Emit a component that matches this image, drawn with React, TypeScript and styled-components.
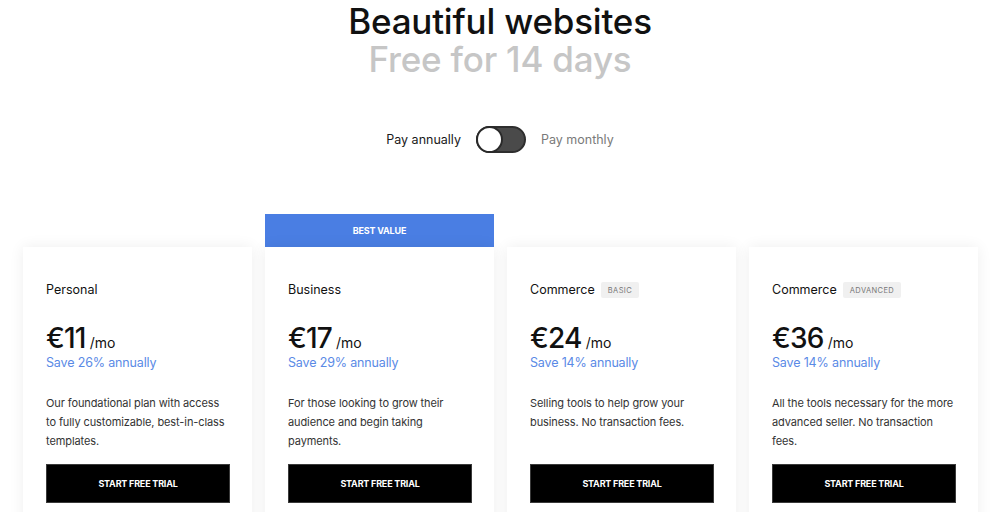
import React from "react";
import styled, { createGlobalStyle } from "styled-components";

const Global = createGlobalStyle`
  html, body { margin: 0; padding: 0; background: #fff; }
  body { font-family: Inter, "Liberation Sans", Arial, sans-serif; color: #111; overflow: hidden; }
  * { box-sizing: border-box; }
`;

const Page = styled.div`
  width: 1000px;
  height: 512px;
  overflow: hidden;
  display: flex;
  flex-direction: column;
  align-items: center;
`;

const Hero = styled.header`
  padding-top: 2px;
  text-align: center;
`;

const Title = styled.h1<{ $muted?: boolean }>`
  margin: 0;
  font-size: 35px;
  line-height: 38px;
  font-weight: 500;
  letter-spacing: -0.2px;
  color: ${(p) => (p.$muted ? "#c6c6c6" : "#111")};
`;

const ToggleRow = styled.div`
  margin-top: 48px;
  display: flex;
  align-items: center;
  gap: 15px;
`;

const ToggleLabel = styled.span<{ $active?: boolean }>`
  font-size: 12.5px;
  line-height: 16px;
  color: ${(p) => (p.$active ? "#1a1a1a" : "#7a7a7a")};
`;

const Track = styled.div`
  position: relative;
  width: 50px;
  height: 27px;
  border-radius: 14px;
  background: #4a4a4a;
  border: 2px solid #2e2e2e;
`;

const Knob = styled.div`
  position: absolute;
  left: -2px;
  top: -2px;
  width: 27px;
  height: 27px;
  border-radius: 50%;
  background: #fff;
  border: 2.5px solid #2a2a2a;
`;

const Plans = styled.div`
  margin-top: 61px;
  width: 100%;
  padding: 0 22px 0 23px;
  display: grid;
  grid-template-columns: repeat(4, 1fr);
  gap: 13px;
`;

const Column = styled.div<{ $featured?: boolean }>`
  display: flex;
  flex-direction: column;
  padding-top: ${(p) => (p.$featured ? "0" : "33px")};
`;

const Banner = styled.div`
  height: 33px;
  background: #4a7ee3;
  color: #fff;
  font-size: 9px;
  font-weight: 700;
  letter-spacing: -0.2px;
  display: flex;
  align-items: center;
  justify-content: center;
`;

const Card = styled.div`
  background: #fff;
  box-shadow: 0 0 14px rgba(0, 0, 0, 0.07);
  padding: 35px 22px 40px 23px;
  display: flex;
  flex-direction: column;
`;

const NameRow = styled.div`
  display: flex;
  align-items: center;
  gap: 6px;
  height: 16px;
`;

const PlanName = styled.span`
  font-size: 12.5px;
  line-height: 16px;
  color: #111;
`;

const Tag = styled.span`
  background: #f0f0f0;
  color: #777;
  font-size: 7.5px;
  letter-spacing: 0.4px;
  padding: 0 7px;
  height: 16px;
  display: inline-flex;
  align-items: center;
  border-radius: 2px;
`;

const PriceRow = styled.div`
  margin-top: 26px;
  display: flex;
  align-items: baseline;
  gap: 4px;
`;

const Price = styled.span`
  font-size: 28px;
  line-height: 28px;
  font-weight: 500;
  letter-spacing: -0.8px;
  color: #111;
`;

const Per = styled.span`
  font-size: 14px;
  color: #111;
`;

const Save = styled.div`
  margin-top: 3px;
  font-size: 12.5px;
  line-height: 16px;
  letter-spacing: -0.15px;
  color: #5a8ae6;
`;

const Desc = styled.p`
  margin: 23px 0 0;
  font-size: 11px;
  line-height: 19px;
  letter-spacing: -0.1px;
  color: #333;
  height: 57px;
`;

const Button = styled.button`
  margin-top: 13px;
  height: 39px;
  width: 100%;
  background: #000;
  border: 1px solid #3a3a3a;
  color: #fff;
  font-family: inherit;
  font-size: 9px;
  font-weight: 700;
  letter-spacing: -0.2px;
  text-transform: uppercase;
  cursor: pointer;
`;

type Plan = {
  name: string;
  tag?: string;
  price: string;
  save: string;
  desc: string;
  featured?: boolean;
};

const plans: Plan[] = [
  {
    name: "Personal",
    price: "€11",
    save: "Save 26% annually",
    desc: "Our foundational plan with access to fully customizable, best-in-class templates.",
  },
  {
    name: "Business",
    price: "€17",
    save: "Save 29% annually",
    desc: "For those looking to grow their audience and begin taking payments.",
    featured: true,
  },
  {
    name: "Commerce",
    tag: "BASIC",
    price: "€24",
    save: "Save 14% annually",
    desc: "Selling tools to help grow your business. No transaction fees.",
  },
  {
    name: "Commerce",
    tag: "ADVANCED",
    price: "€36",
    save: "Save 14% annually",
    desc: "All the tools necessary for the more advanced seller. No transaction fees.",
  },
];

export default function App() {
  return (
    <Page>
      <Global />
      <Hero>
        <Title>Beautiful websites</Title>
        <Title $muted>Free for 14 days</Title>
      </Hero>
      <ToggleRow>
        <ToggleLabel $active>Pay annually</ToggleLabel>
        <Track>
          <Knob />
        </Track>
        <ToggleLabel>Pay monthly</ToggleLabel>
      </ToggleRow>
      <Plans>
        {plans.map((p, i) => (
          <Column key={i} $featured={p.featured}>
            {p.featured && <Banner>BEST VALUE</Banner>}
            <Card>
              <NameRow>
                <PlanName>{p.name}</PlanName>
                {p.tag && <Tag>{p.tag}</Tag>}
              </NameRow>
              <PriceRow>
                <Price>{p.price}</Price>
                <Per>/mo</Per>
              </PriceRow>
              <Save>{p.save}</Save>
              <Desc>{p.desc}</Desc>
              <Button>Start free trial</Button>
            </Card>
          </Column>
        ))}
      </Plans>
    </Page>
  );
}
